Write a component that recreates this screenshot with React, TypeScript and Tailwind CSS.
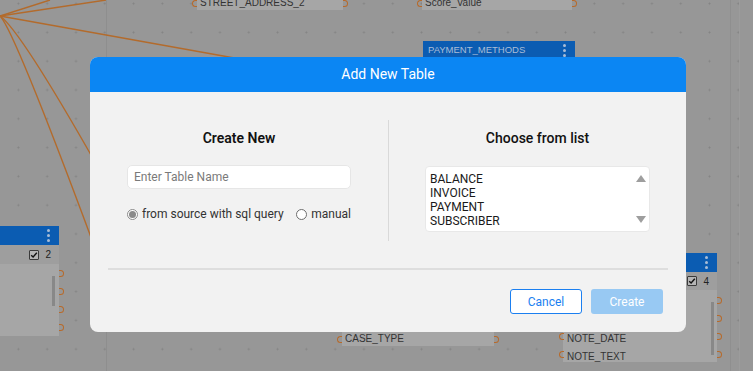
import React from 'react';

function Kebab() {
  return (
    <div className="flex flex-col gap-[2px]">
      <span className="block w-[3px] h-[3px] rounded-full bg-[#a8bcd6]" />
      <span className="block w-[3px] h-[3px] rounded-full bg-[#a8bcd6]" />
      <span className="block w-[3px] h-[3px] rounded-full bg-[#a8bcd6]" />
    </div>
  );
}

function Check() {
  return (
    <span className="flex items-center justify-center w-[10px] h-[10px] border border-[#3a3a3a] bg-[#b5b5b5] rounded-[1px]">
      <svg width="8" height="8" viewBox="0 0 8 8">
        <path d="M1.2 4.2 L3.1 6 L6.8 1.8" stroke="#111" strokeWidth="1.4" fill="none" />
      </svg>
    </span>
  );
}

function Port({ side }: { side: 'left' | 'right' }) {
  return (
    <span
      className={
        side === 'right'
          ? 'block w-[5px] h-[7px] border-[1.5px] border-l-0 border-[#b86a2a] rounded-r-full'
          : 'block w-[5px] h-[7px] border-[1.5px] border-r-0 border-[#b86a2a] rounded-l-full'
      }
    />
  );
}

function Background() {
  return (
    <>
      {/* page panel lines */}
      <div className="absolute left-[106px] top-0 h-full w-px bg-[#8e8e8e]" />
      <div className="absolute left-[730px] top-0 h-full w-px bg-[#8f8f8f]" />
      <div className="absolute left-[739px] top-0 h-full w-px bg-[#9c9c9c]" />

      {/* relation lines */}
      <svg className="absolute inset-0" width="753" height="371">
        <g stroke="#b36b2c" strokeWidth="1.4" fill="none">
          <path d="M0 16 L50 0" />
          <path d="M0 16 L106 0" />
          <path d="M0 16 L240 59" />
          <path d="M0 16 Q20 30 95 162" />
          <path d="M0 16 Q14 30 92 240" />
        </g>
      </svg>

      {/* STREET_ADDRESS_2 row */}
      <div className="absolute left-[192px] top-[-4px] w-[156px] flex items-center">
        <Port side="left" />
        <div className="flex-1 h-[14px] bg-[#a6a6a6] text-[10px] leading-[14px] text-[#333] pl-[3px] font-['Liberation_Sans',sans-serif]">
          STREET_ADDRESS_2
        </div>
        <Port side="right" />
      </div>

      {/* Score_Value row */}
      <div className="absolute left-[417px] top-[-4px] w-[160px] flex items-center">
        <Port side="left" />
        <div className="flex-1 h-[14px] bg-[#a6a6a6] text-[10px] leading-[14px] text-[#333] pl-[3px] font-['Liberation_Sans',sans-serif]">
          Score_Value
        </div>
        <Port side="right" />
      </div>

      {/* PAYMENT_METHODS header */}
      <div className="absolute left-[423px] top-[41px] w-[152px] h-[18px] bg-[#0b5cb2] flex items-center justify-between pl-[5px] pr-[9px]">
        <span className="text-[9.5px] text-[#a9bcd7] font-['Liberation_Sans',sans-serif]">PAYMENT_METHODS</span>
        <Kebab />
      </div>

      {/* left node */}
      <div className="absolute left-0 top-[226px] w-[59px]">
        <div className="h-[19px] bg-[#0b5cb2] flex items-center justify-end pr-[9px]">
          <Kebab />
        </div>
        <div className="h-[19px] bg-[#9e9e9e] flex items-center justify-end gap-[6px] pr-[8px] text-[10px] text-[#222] font-['Liberation_Sans',sans-serif]">
          <Check />
          <span>2</span>
        </div>
        <div className="relative h-[72px] bg-[#a6a6a6]">
          <div className="absolute right-[4px] top-[12px] w-[3px] h-[30px] bg-[#888]" />
        </div>
      </div>
      <div className="absolute left-[59px] top-[270px] flex flex-col gap-[11px]">
        <Port side="right" />
        <Port side="right" />
        <Port side="right" />
        <Port side="right" />
      </div>

      {/* CASE_TYPE row */}
      <div className="absolute left-[337px] top-[332px] w-[162px] flex items-center">
        <Port side="left" />
        <div className="flex-1 h-[14px] bg-[#a6a6a6] text-[10px] leading-[14px] text-[#333] pl-[3px] font-['Liberation_Sans',sans-serif]">
          CASE_TYPE
        </div>
        <Port side="right" />
      </div>

      {/* right node */}
      <div className="absolute left-[563px] top-[253px] w-[154px]">
        <div className="h-[19px] bg-[#0b5cb2] flex items-center justify-end pr-[9px]">
          <Kebab />
        </div>
        <div className="h-[18px] bg-[#9e9e9e] flex items-center justify-end gap-[6px] pr-[8px] text-[10px] text-[#222] font-['Liberation_Sans',sans-serif]">
          <Check />
          <span>4</span>
        </div>
        <div className="relative h-[72px] bg-[#a6a6a6] text-[10px] text-[#333] font-['Liberation_Sans',sans-serif]">
          <div className="absolute left-[4px] top-[40px] leading-[18px]">
            <div>NOTE_DATE</div>
            <div>NOTE_TEXT</div>
          </div>
          <div className="absolute right-[3px] top-[12px] w-[3px] h-[53px] bg-[#888]" />
        </div>
      </div>
      <div className="absolute left-[559px] top-[333px] flex flex-col gap-[11px]">
        <Port side="left" />
        <Port side="left" />
      </div>
      <div className="absolute left-[717px] top-[297px] flex flex-col gap-[11px]">
        <Port side="right" />
        <Port side="right" />
        <Port side="right" />
        <Port side="right" />
      </div>
    </>
  );
}

function Radio({ checked, label }: { checked: boolean; label: string }) {
  return (
    <label className="flex items-center gap-[4px]">
      <span
        className={
          checked
            ? 'flex items-center justify-center w-[11px] h-[11px] rounded-full border border-[#8a8a8a] bg-white'
            : 'flex items-center justify-center w-[11px] h-[11px] rounded-full border border-[#6e6e6e] bg-white'
        }
      >
        {checked && <span className="block w-[7px] h-[7px] rounded-full bg-[#8a8a8a]" />}
      </span>
      <span>{label}</span>
    </label>
  );
}

function Modal() {
  const tables = ['BALANCE', 'INVOICE', 'PAYMENT', 'SUBSCRIBER'];

  return (
    <div className="absolute left-[90px] top-[57px] w-[596px] rounded-[8px] bg-[#f2f2f2] overflow-hidden font-['Roboto',sans-serif]">
      <div className="h-[35px] bg-[#0b86f3] flex items-center justify-center text-white text-[14px]">
        Add New Table
      </div>

      <div className="pt-[28px] flex">
        <div className="w-[298px] h-[121px] flex flex-col items-center pt-[8px]">
          <h2 className="text-[14px] leading-[20px] font-semibold text-[#111]">Create New</h2>
          <input
            className="mt-[17px] w-[224px] h-[24px] rounded-[5px] border border-[#e6e6e6] bg-white px-[6px] text-[12px] text-[#222] placeholder:text-[#7a7a7a] outline-none"
            placeholder="Enter Table Name"
          />
          <div className="mt-[17px] w-[224px] h-[16px] flex items-center justify-between text-[12px] text-[#333]">
            <Radio checked label="from source with sql query" />
            <Radio checked={false} label="manual" />
          </div>
        </div>

        <div className="w-px h-[121px] bg-[#d9d9d9]" />

        <div className="w-[297px] h-[121px] flex flex-col items-center pt-[8px]">
          <h2 className="text-[14px] leading-[20px] font-medium text-[#111]">Choose from list</h2>
          <div className="relative mt-[18px] w-[225px] h-[66px] rounded-[4px] border border-[#e8e8e8] bg-white pl-[4px] pt-[5px] text-[12px] leading-[14px] text-[#1a1a1a]">
            {tables.map((t) => (
              <div key={t}>{t}</div>
            ))}
            <div className="absolute right-0 top-0 h-full w-[16px] flex flex-col items-center justify-between py-[8px]">
              <svg width="10" height="7" viewBox="0 0 10 7">
                <path d="M0 7 L5 0 L10 7 Z" fill="#9e9e9e" />
              </svg>
              <svg width="10" height="7" viewBox="0 0 10 7">
                <path d="M0 0 L10 0 L5 7 Z" fill="#9e9e9e" />
              </svg>
            </div>
          </div>
        </div>
      </div>

      <div className="mx-[18px] mt-[27px] h-[2px] bg-[#dedede]" />

      <div className="flex justify-end gap-[9px] pr-[23px] pt-[19px] pb-[18px]">
        <button className="w-[72px] h-[25px] rounded-[3px] border border-[#1b7ff0] bg-white text-[12px] text-[#1b7ff0]">
          Cancel
        </button>
        <button className="w-[72px] h-[25px] rounded-[3px] bg-[#98c9f3] text-[12px] text-white">
          Create
        </button>
      </div>
    </div>
  );
}

export default function App() {
  return (
    <div className="relative w-[753px] h-[371px] overflow-hidden bg-[#979797] bg-[radial-gradient(circle,#838383_0.9px,transparent_1.1px)] bg-[length:28.8px_28.8px] bg-[position:4px_18px]">
      <Background />
      <Modal />
    </div>
  );
}
